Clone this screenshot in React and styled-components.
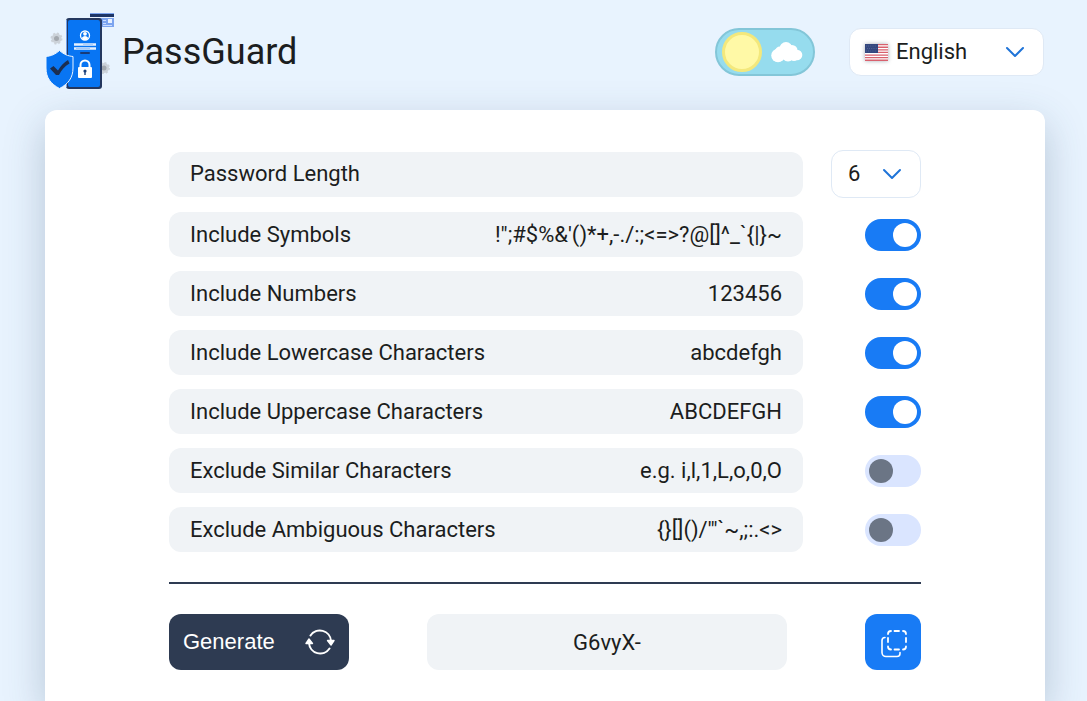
import React, { useState } from "react";
import styled, { createGlobalStyle } from "styled-components";

const GlobalStyle = createGlobalStyle`
  *, *::before, *::after { box-sizing: border-box; }
  body {
    margin: 0;
    background: #e8f3fe;
    color: #1b1d20;
    font-family: Roboto, "Liberation Sans", sans-serif;
    font-size: 22px;
    line-height: 28px;
  }
`;

const Page = styled.div`
  min-height: 100vh;
  display: flex;
  flex-direction: column;
  padding: 0 42px 0 45px;
  overflow: hidden;
`;

const Header = styled.header`
  display: flex;
  align-items: center;
  gap: 34px;
  height: 110px;
  padding: 0 1px 6px 0;
`;

const Brand = styled.a`
  display: flex;
  align-items: center;
  gap: 6px;
  margin-right: auto;
  color: inherit;
  text-decoration: none;
`;

const Title = styled.h1`
  margin: 0;
  font-size: 36px;
  line-height: 44px;
  font-weight: 400;
`;

const ThemeSwitch = styled.label`
  display: grid;
  width: 100px;
  height: 48px;
  cursor: pointer;

  > * { grid-area: 1 / 1; }
  > svg {
    align-self: center;
    justify-self: end;
    margin-right: 12px;
    pointer-events: none;
    z-index: 1;
  }
`;

const ThemeInput = styled.input`
  appearance: none;
  display: flex;
  align-items: center;
  margin: 0;
  padding: 0 5px;
  border: 2px solid #83c6d8;
  border-radius: 24px;
  background: #96dcee;
  cursor: pointer;

  &::before {
    content: "";
    width: 40px;
    height: 40px;
    border: 3px solid #f3e87c;
    border-radius: 50%;
    background: #fff9a6;
  }
`;

const SelectBox = styled.label`
  display: grid;
  align-items: center;
  flex: none;
  width: ${(p) => p.$width}px;

  > * { grid-area: 1 / 1; }
  > svg { pointer-events: none; z-index: 1; }
`;

const Select = styled.select`
  appearance: none;
  width: 100%;
  height: 48px;
  padding: 0 16px;
  padding-left: ${(p) => p.$indent}px;
  border: 1px solid #dfe9f5;
  border-radius: 12px;
  background: #fff;
  color: inherit;
  font: inherit;
  cursor: pointer;
`;

const ChevronIcon = styled.svg`
  justify-self: end;
  margin-right: 19px;
`;

const FlagIcon = styled.svg`
  margin-left: 16px;
  filter: drop-shadow(0 0 2px rgba(60, 70, 90, 0.45));
`;

const Card = styled.main`
  flex: 1;
  padding: 40px 124px 31px;
  border-radius: 12px 12px 0 0;
  background: #fff;
  box-shadow: 0 14px 40px rgba(50, 80, 110, 0.28);
`;

const Options = styled.div`
  display: flex;
  flex-direction: column;
  gap: 14px;
  padding-bottom: 30px;
  border-bottom: 2px solid #2e3b52;
`;

const Row = styled.div`
  display: flex;
  align-items: center;
  justify-content: space-between;
  gap: 28px;
`;

const Field = styled.label`
  display: flex;
  align-items: center;
  justify-content: space-between;
  width: 634px;
  height: 45px;
  padding: 0 21px;
  border-radius: 12px;
  background: #f0f3f6;
`;

const Switch = styled.input`
  appearance: none;
  display: flex;
  align-items: center;
  flex: none;
  width: 56px;
  height: 32px;
  margin: 0;
  padding: 0 4px;
  border-radius: 16px;
  background: #dae5ff;
  cursor: pointer;

  &::before {
    content: "";
    width: 24px;
    height: 24px;
    border-radius: 50%;
    background: #6b7585;
  }
  &:checked {
    justify-content: flex-end;
    background: #187bf5;
  }
  &:checked::before { background: #fff; }
`;

const Actions = styled.div`
  display: flex;
  align-items: center;
  justify-content: space-between;
  padding-top: 30px;
`;

const GenerateButton = styled.button`
  display: flex;
  align-items: center;
  justify-content: space-between;
  width: 180px;
  height: 56px;
  padding: 0 14px;
  border: 0;
  border-radius: 12px;
  background: #2e3b52;
  color: #fff;
  font-family: "Liberation Sans", Arial, sans-serif;
  font-size: 22px;
  cursor: pointer;
`;

const Result = styled.input`
  width: 360px;
  height: 56px;
  border: 0;
  border-radius: 12px;
  background: #f0f3f6;
  color: inherit;
  font: inherit;
  text-align: center;
`;

const CopyButton = styled.button`
  display: grid;
  place-items: center;
  width: 56px;
  height: 56px;
  padding: 2px 0 0 2px;
  border: 0;
  border-radius: 12px;
  background: #187bf5;
  color: #fff;
  cursor: pointer;
`;

const Gear = ({ x, y }) => (
  <g transform={`translate(${x} ${y})`}>
    <circle r="5" fill="#ccd2d9" />
    <circle r="5" fill="none" stroke="#ccd2d9" strokeWidth="2" strokeDasharray="2 1.9" />
    <circle r="2.5" fill="#a3a8ae" />
  </g>
);

const Logo = () => (
  <svg width="71" height="80" viewBox="0 0 71 80" aria-hidden="true">
    <Gear x={11.5} y={26.5} />
    <Gear x={59} y={56} />
    <rect x="45" y="1" width="24" height="14" fill="#7ca4ef" />
    <rect x="45" y="2" width="24" height="3" fill="#1d3567" />
    <rect x="45" y="5" width="24" height="1" fill="#e8f1ff" />
    <rect x="63" y="7" width="4" height="4" fill="#e8f1ff" />
    <path d="M58 8.500h3M58 11.500h3M58 13.500h9" stroke="#c9dcff" />
    <rect x="21" y="6" width="36" height="71" rx="3" fill="#24375f" />
    <rect x="23" y="8" width="32" height="67" rx="2" fill="#0875f3" />
    <rect x="21" y="8" width="1" height="67" fill="#6f9fe8" />
    <circle cx="40" cy="23.500" r="4.500" fill="none" stroke="#fff" strokeWidth="1.300" />
    <circle cx="40" cy="21.800" r="1.900" fill="#fff" />
    <path d="M36.500 26q3.500-4 7 0q-3.500 4-7 0Z" fill="#fff" />
    <path d="M29 32.500h22M29 36.500h22" stroke="#e6f1ff" strokeWidth="2.500" />
    <path d="M38 32.300h10M31 36.500h14" stroke="#a6c9f7" />
    <rect x="35" y="40" width="10" height="2" rx="1" fill="#183b78" />
    <path d="M35.500 57v-4a4.500 4.500 0 0 1 9 0v4" fill="none" stroke="#fff" strokeWidth="2" />
    <rect x="33" y="55" width="14" height="11" rx="1" fill="#fff" />
    <circle cx="40" cy="59" r="1.600" fill="#1b3e78" />
    <path d="M40 59v4" stroke="#1b3e78" strokeWidth="1.400" />
    <path d="M14.500 38.500C10 42.500 6 44 1 44.500V56C1 66 6 72 14.500 76.500C23 72 28 66 28 56V44.500C23 44 19 42.500 14.500 38.500Z" fill="#0875f3" stroke="#eaf4ff" />
    <path d="M5 56.500l3.500-2.500 4.500 4.500c3-5 6-8 10-10.500l1.500 3.500c-5 3-8 6.500-10.500 11.500h-3Z" fill="#1c2e50" />
  </svg>
);

const Cloud = () => (
  <svg width="32" height="22" viewBox="0 0 32 22" fill="#fff" aria-hidden="true">
    <circle cx="7" cy="14.500" r="6.800" />
    <circle cx="9" cy="10.500" r="5" />
    <circle cx="15" cy="7.500" r="6.500" />
    <circle cx="21" cy="9.500" r="5.500" />
    <circle cx="26" cy="14" r="5.300" />
    <circle cx="17" cy="14" r="6.500" />
    <circle cx="23" cy="15.500" r="4.500" />
  </svg>
);

const Flag = () => (
  <FlagIcon width="23" height="17" viewBox="0 0 23 17" aria-hidden="true">
    <rect width="23" height="17" fill="#fff" />
    <path
      d="M0 .650h23M0 3.250h23M0 5.850h23M0 8.450h23M0 11.050h23M0 13.650h23M0 16.250h23"
      stroke="#d8606d"
      strokeWidth="1.300"
    />
    <rect width="13" height="9" fill="#34477e" />
    <path d="M1 2h11M2 4.500h10M1 7h11" stroke="#6474a0" strokeWidth=".8" strokeDasharray=".8 1.400" />
  </FlagIcon>
);

const Chevron = () => (
  <ChevronIcon width="20" height="12" viewBox="0 0 20 12" aria-hidden="true">
    <path d="M2 2l8 8 8-8" fill="none" stroke="#1f74d8" strokeWidth="2" strokeLinecap="round" strokeLinejoin="round" />
  </ChevronIcon>
);

const RefreshIcon = () => (
  <svg width="30" height="26" viewBox="0 0 30 26" fill="none" stroke="#fff" strokeWidth="2" strokeLinecap="round" aria-hidden="true">
    <path d="M5.500 6.500A11.200 11.200 0 0 1 26 12" />
    <path d="M24.500 19.500A11.200 11.200 0 0 1 4 14" />
    <path d="M22.500 11.500h6.500l-3 4.500Z" fill="#fff" strokeWidth="1.400" strokeLinejoin="round" />
    <path d="M7.500 14.500H1l3-4.500Z" fill="#fff" strokeWidth="1.400" strokeLinejoin="round" />
  </svg>
);

const CopyIcon = () => (
  <svg width="28" height="30" viewBox="0 0 28 30" fill="none" stroke="currentColor" strokeWidth="1.800" strokeLinecap="round" aria-hidden="true">
    <path d="M8 6a3 3 0 0 1 3-3M14.500 3h4.500M23 3a3 3 0 0 1 3 3M26 10v4M26 18.500a3 3 0 0 1-3 3M19 21.500h-4.500M11 21.500a3 3 0 0 1-3-3M8 14v-4" />
    <path d="M5 9.500a3 3 0 0 0-3 3v12a4 4 0 0 0 4 4h11a3 3 0 0 0 3-3v-1" strokeWidth="1.600" />
  </svg>
);

const OPTIONS = [
  { id: "symbols", label: "Include Symbols", sample: "!\";#$%&'()*+,-./:;<=>?@[]^_`{|}~", on: true },
  { id: "numbers", label: "Include Numbers", sample: "123456", on: true },
  { id: "lowercase", label: "Include Lowercase Characters", sample: "abcdefgh", on: true },
  { id: "uppercase", label: "Include Uppercase Characters", sample: "ABCDEFGH", on: true },
  { id: "similar", label: "Exclude Similar Characters", sample: "e.g. i,l,1,L,o,0,O", on: false },
  { id: "ambiguous", label: "Exclude Ambiguous Characters", sample: "{}[]()/'\"`~,;:.<>", on: false },
];

const LENGTHS = [6, 8, 10, 12, 16, 20];

export default function App() {
  const [length, setLength] = useState(6);

  return (
    <>
      <GlobalStyle />
      <Page>
        <Header>
          <Brand href="#">
            <Logo />
            <Title>PassGuard</Title>
          </Brand>
          <ThemeSwitch>
            <ThemeInput type="checkbox" aria-label="Dark theme" />
            <Cloud />
          </ThemeSwitch>
          <SelectBox $width={195}>
            <Flag />
            <Select $indent={46} aria-label="Language" defaultValue="en">
              <option value="en">English</option>
            </Select>
            <Chevron />
          </SelectBox>
        </Header>
        <Card>
          <Options>
            <Row>
              <Field htmlFor="length">Password Length</Field>
              <SelectBox $width={90}>
                <Select id="length" $indent={16} value={length} onChange={(e) => setLength(Number(e.target.value))}>
                  {LENGTHS.map((n) => (
                    <option key={n} value={n}>{n}</option>
                  ))}
                </Select>
                <Chevron />
              </SelectBox>
            </Row>
            {OPTIONS.map((o) => (
              <Row key={o.id}>
                <Field htmlFor={o.id}>
                  <span>{o.label}</span>
                  <span>{o.sample}</span>
                </Field>
                <Switch type="checkbox" id={o.id} defaultChecked={o.on} />
              </Row>
            ))}
          </Options>
          <Actions>
            <GenerateButton type="button">
              Generate
              <RefreshIcon />
            </GenerateButton>
            <Result readOnly value="G6vyX-" aria-label="Generated password" />
            <CopyButton type="button" aria-label="Copy password">
              <CopyIcon />
            </CopyButton>
          </Actions>
        </Card>
      </Page>
    </>
  );
}
